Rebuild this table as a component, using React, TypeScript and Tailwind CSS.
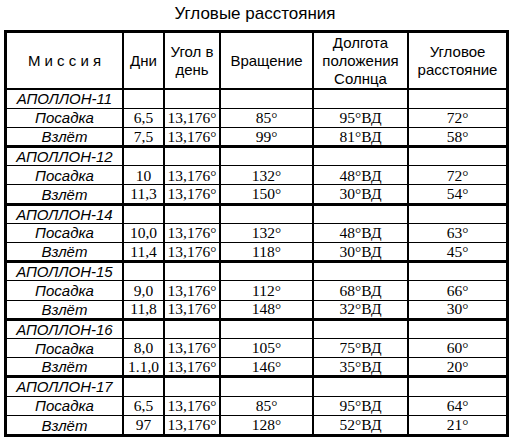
import { Fragment } from "react";

type Leg = {
  label: string;
  days: string;
  rotation: string;
  sun: string;
  distance: string;
};

type Mission = {
  name: string;
  legs: Leg[];
};

const missions: Mission[] = [
  {
    name: "АПОЛЛОН-11",
    legs: [
      { label: "Посадка", days: "6,5", rotation: "85°", sun: "95°ВД", distance: "72°" },
      { label: "Взлёт", days: "7,5", rotation: "99°", sun: "81°ВД", distance: "58°" },
    ],
  },
  {
    name: "АПОЛЛОН-12",
    legs: [
      { label: "Посадка", days: "10", rotation: "132°", sun: "48°ВД", distance: "72°" },
      { label: "Взлёт", days: "11,3", rotation: "150°", sun: "30°ВД", distance: "54°" },
    ],
  },
  {
    name: "АПОЛЛОН-14",
    legs: [
      { label: "Посадка", days: "10,0", rotation: "132°", sun: "48°ВД", distance: "63°" },
      { label: "Взлёт", days: "11,4", rotation: "118°", sun: "30°ВД", distance: "45°" },
    ],
  },
  {
    name: "АПОЛЛОН-15",
    legs: [
      { label: "Посадка", days: "9,0", rotation: "112°", sun: "68°ВД", distance: "66°" },
      { label: "Взлёт", days: "11,8", rotation: "148°", sun: "32°ВД", distance: "30°" },
    ],
  },
  {
    name: "АПОЛЛОН-16",
    legs: [
      { label: "Посадка", days: "8,0", rotation: "105°", sun: "75°ВД", distance: "60°" },
      { label: "Взлёт", days: "1.1,0", rotation: "146°", sun: "35°ВД", distance: "20°" },
    ],
  },
  {
    name: "АПОЛЛОН-17",
    legs: [
      { label: "Посадка", days: "6,5", rotation: "85°", sun: "95°ВД", distance: "64°" },
      { label: "Взлёт", days: "97", rotation: "128°", sun: "52°ВД", distance: "21°" },
    ],
  },
];

const sans = "font-['Liberation_Sans',Arial,sans-serif]";
const serif = "font-['Liberation_Serif','Times_New_Roman',serif]";
const cell = "border-x-2 border-black p-0 text-center h-[19.2px] leading-none";
const num = `${serif} text-[15.5px]`;

export default function App() {
  return (
    <div className={`w-[510px] h-[440px] bg-white text-black ${sans}`}>
      <h1 className="pt-[4px] h-[30px] text-center text-[17px] leading-[20px] font-normal">
        Угловые расстояния
      </h1>
      <div className="ml-[4px] w-[505px] border-[3px] border-black">
        <table className="w-full table-fixed border-collapse">
          <colgroup>
            <col className="w-[116px]" />
            <col className="w-[41px]" />
            <col className="w-[56px]" />
            <col className="w-[93px]" />
            <col className="w-[95px]" />
            <col className="w-[98px]" />
          </colgroup>
          <thead>
            <tr className="h-[56px] text-[15px] leading-[18px]">
              <th className="border-x-2 border-b-2 border-black font-normal border-l-0">М и с с и я</th>
              <th className="border-x-2 border-b-2 border-black font-normal">Дни</th>
              <th className="border-x-2 border-b-2 border-black font-normal">
                Угол в<br />день
              </th>
              <th className="border-x-2 border-b-2 border-black font-normal">Вращение</th>
              <th className="border-x-2 border-b-2 border-black font-normal">
                Долгота<br />положения<br />Солнца
              </th>
              <th className="border-x-2 border-b-2 border-black font-normal border-r-0">
                Угловое<br />расстояние
              </th>
            </tr>
          </thead>
          <tbody>
            {missions.map((m, mi) => (
              <Fragment key={m.name}>
                <tr className={mi > 0 ? "border-t-[3px] border-black" : ""}>
                  <td className={`${cell} border-l-0 border-b border-black italic text-[15px]`}>{m.name}</td>
                  <td className={`${cell} border-b`}></td>
                  <td className={`${cell} border-b`}></td>
                  <td className={`${cell} border-b`}></td>
                  <td className={`${cell} border-b`}></td>
                  <td className={`${cell} border-r-0 border-b`}></td>
                </tr>
                {m.legs.map((leg, li) => (
                  <tr key={leg.label} className={li === 0 ? "border-b border-black" : ""}>
                    <td className={`${cell} border-l-0 italic text-[15px]`}>{leg.label}</td>
                    <td className={`${cell} ${num}`}>{leg.days}</td>
                    <td className={`${cell} ${num}`}>13,176°</td>
                    <td className={`${cell} ${num}`}>{leg.rotation}</td>
                    <td className={`${cell} ${num}`}>{leg.sun}</td>
                    <td className={`${cell} border-r-0 ${num}`}>{leg.distance}</td>
                  </tr>
                ))}
              </Fragment>
            ))}
          </tbody>
        </table>
      </div>
    </div>
  );
}
